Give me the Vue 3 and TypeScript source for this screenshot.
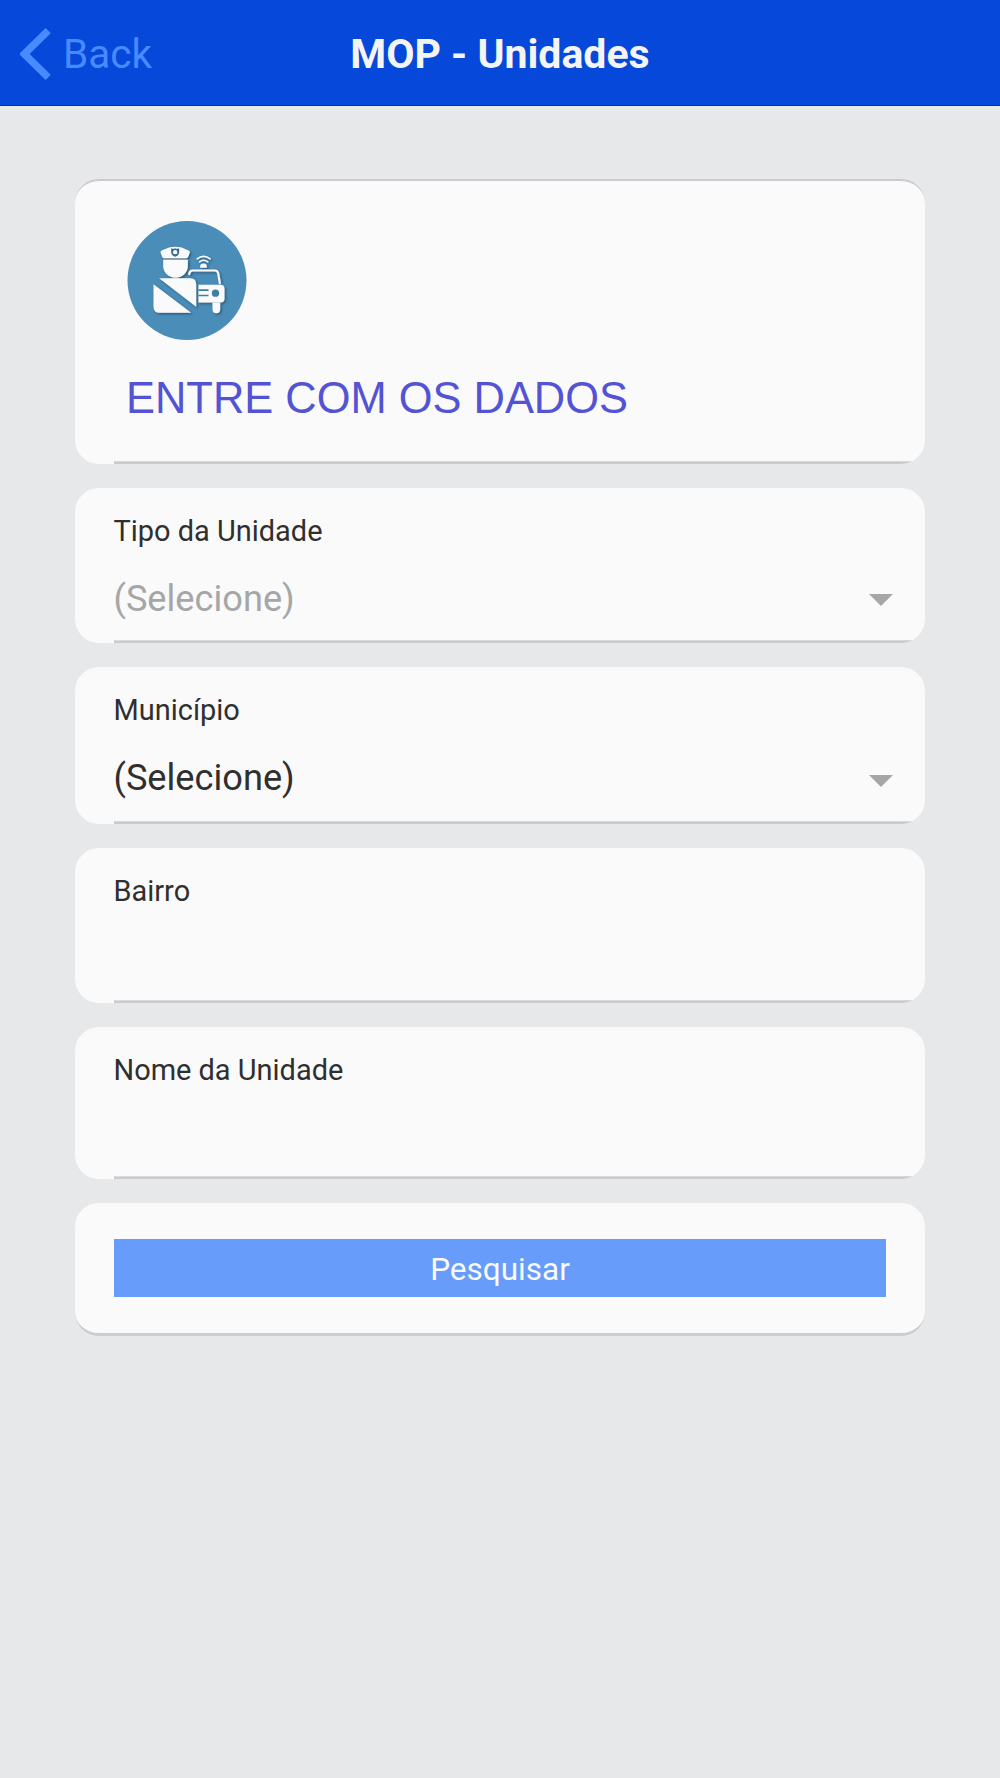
<script setup lang="ts">
interface Field {
  label: string
  value?: string
  muted?: boolean
  select: boolean
  height: number
}

const fields: Field[] = [
  { label: 'Tipo da Unidade', value: '(Selecione)', muted: true, select: true, height: 155 },
  { label: 'Município', value: '(Selecione)', select: true, height: 157 },
  { label: 'Bairro', select: false, height: 155 },
  { label: 'Nome da Unidade', select: false, height: 152 },
]
</script>

<template>
  <div class="page">
    <header class="bar">
      <a class="back">
        <svg class="chevron" width="31" height="52" viewBox="0 0 31 52">
          <path d="M28.2 2.7 4.3 26 28.2 49.3" fill="none" stroke="#488aff" stroke-width="7.4" />
        </svg>
        <span>Back</span>
      </a>
      <h1 class="title">MOP - Unidades</h1>
    </header>

    <main class="list">
      <section class="card intro">
        <svg class="badge" width="120" height="119" viewBox="35.5 33.5 360 357">
          <defs>
            <filter id="soft" x="-10%" y="-10%" width="125%" height="125%">
              <feDropShadow dx="4" dy="4" stdDeviation="3" flood-color="#10324a" flood-opacity="0.6" />
            </filter>
          </defs>
          <circle cx="215.5" cy="212" r="178.5" fill="#4a8db8" />
          <g filter="url(#soft)" fill="#fafafa">
            <path d="M136 128Q135 123 141 121L164 112Q181 109 197 112L219 121Q225 123 224 128L219 141Q218 145 214 145H146Q142 145 141 141Z" />
            <path d="M144 150H218V168C218 188 202 204 181 204C160 204 144 188 144 168Z" />
            <path d="M132 205H225Q243 205 243 223V291Z" />
            <path d="M115 223 228 309H133Q115 309 115 291Z" />
            <path d="M250 225H316Q328 225 328 237V266Q328 278 316 278H250Z" />
            <path d="M292 278H315V299Q315 310 303.5 310Q292 310 292 299Z" />
            <path d="M255 174V170Q255 161 265 161Q275 161 275 170V174Z" />
            <g fill="none" stroke="#fafafa" stroke-linecap="round">
              <path d="M222 193Q223 182 233 182H299Q307 182 309 190L314 220" stroke-width="6.5" />
              <path d="M246 147Q265 132 285 147" stroke-width="5" />
              <path d="M253 156Q265 146 278 156" stroke-width="4.5" />
            </g>
          </g>
          <path d="M168 115Q175 118 180 115Q185 118 192 115V128Q191 137 180 141Q169 137 168 128Z" fill="#35698c" />
          <circle cx="180" cy="127" r="6.5" fill="#fafafa" />
          <circle cx="301" cy="250" r="11" fill="#3e7da6" />
          <path d="M250 241H280M250 257H280" stroke="#3e7da6" stroke-width="5" />
        </svg>
        <h2 class="heading">ENTRE COM OS DADOS</h2>
      </section>

      <section
        v-for="field in fields"
        :key="field.label"
        class="card field"
        :style="{ height: field.height + 'px' }"
      >
        <label class="label">{{ field.label }}</label>
        <div v-if="field.select" class="row">
          <span :class="{ muted: field.muted }">{{ field.value }}</span>
          <i class="caret"></i>
        </div>
      </section>

      <section class="card action">
        <button class="submit" type="button">Pesquisar</button>
      </section>
    </main>
  </div>
</template>

<style>
body {
  margin: 0;
  background: #e6e8ea;
}
</style>

<style scoped>
.page {
  min-height: 1778px;
  background: #e6e8ea;
  font-family: Roboto, sans-serif;
  color: #2f2f2f;
}

.bar {
  display: grid;
  grid-template-columns: 1fr auto 1fr;
  align-items: center;
  box-sizing: border-box;
  height: 106px;
  border-bottom: 1px solid #0230a8;
  background: #0548da;
}

.back {
  display: flex;
  align-items: center;
  gap: 12px;
  padding-left: 20px;
  padding-top: 2px;
  color: #488aff;
  font-size: 40.5px;
  line-height: 48px;
}

.chevron {
  display: block;
}

.title {
  margin: 0;
  padding-top: 2px;
  color: #f4f4f4;
  font-size: 41px;
  line-height: 48px;
  font-weight: 700;
}

.list {
  display: flex;
  flex-direction: column;
  gap: 24px;
  padding: 73px 75px 0;
}

.card {
  box-sizing: border-box;
  overflow: hidden;
  border-radius: 24px;
  background: #fafafa;
}

.intro,
.field {
  background: linear-gradient(#d8d8db 1px, #cbcbcf 1px) 39px 100% / 100% 3px no-repeat, #fafafa;
}

.intro {
  height: 285px;
  padding: 40px 52px 0;
  border-top: 2px solid #cbcbcf;
}

.badge {
  display: block;
}

.heading {
  margin: 32px 0 0 -1px;
  color: #5353d3;
  font-family: "Liberation Sans", Arial, sans-serif;
  font-size: 43.45px;
  line-height: 52px;
  font-weight: 400;
  white-space: nowrap;
}

.field {
  display: flex;
  flex-direction: column;
  padding: 26px 31.6px 0 38.5px;
}

.label {
  display: block;
  font-size: 28.95px;
  line-height: 34px;
}

.row {
  display: flex;
  flex: 1;
  justify-content: space-between;
  margin-top: 29px;
  font-size: 36.2px;
  line-height: 44px;
}

.muted {
  color: #a6a6a6;
}

.caret {
  align-self: flex-end;
  width: 0;
  height: 0;
  margin-bottom: 37px;
  border: 12px solid transparent;
  border-top-color: #a6a6a6;
  border-bottom: 0;
}

.action {
  height: 133px;
  padding: 36px 39px 0;
  border-bottom: 3px solid #cdcdd1;
}

.submit {
  display: block;
  width: 100%;
  height: 58px;
  padding: 3px 0 0;
  border: 0;
  border-radius: 0;
  background: #679cfa;
  color: #fafafa;
  font-family: inherit;
  font-size: 31.5px;
  line-height: 36px;
}
</style>
